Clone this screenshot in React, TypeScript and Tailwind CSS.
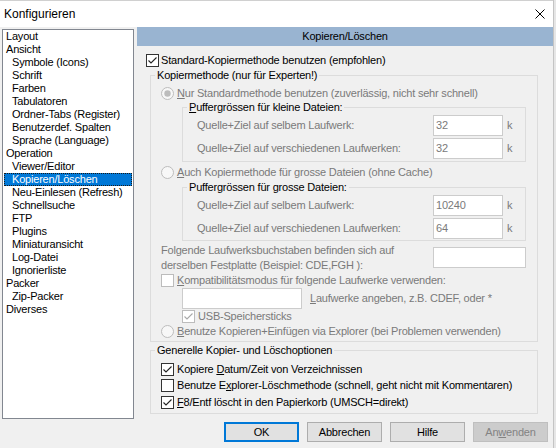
import React from "react";

const GRAY = "text-[#7a7a7a]";

function Check({ checked, disabled }: { checked?: boolean; disabled?: boolean }) {
  const stroke = disabled ? "#bcbcbc" : "#333333";
  return (
    <svg width="13" height="13" viewBox="0 0 13 13" className="shrink-0 block">
      <rect x="0.5" y="0.5" width="12" height="12" fill="#ffffff" stroke={stroke} />
      {checked && (
        <polyline
          points="2.5,6.5 5,9 10.5,3.5"
          fill="none"
          stroke={disabled ? "#a8a8a8" : "#222222"}
          strokeWidth="1.1"
        />
      )}
    </svg>
  );
}

function Radio({ checked, disabled }: { checked?: boolean; disabled?: boolean }) {
  return (
    <svg width="13" height="13" viewBox="0 0 13 13" className="shrink-0 block">
      <circle cx="6.5" cy="6.5" r="6" fill={disabled ? "#f7f7f7" : "#ffffff"} stroke={disabled ? "#bcbcbc" : "#333333"} />
      {checked && <circle cx="6.5" cy="6.5" r="3.2" fill={disabled ? "#bcbcbc" : "#333333"} />}
    </svg>
  );
}

function Group({
  label,
  className,
  children,
}: {
  label: React.ReactNode;
  className?: string;
  children: React.ReactNode;
}) {
  return (
    <fieldset className={`border border-[#dcdcdc] ${className ?? ""}`}>
      <legend className="ml-[4px] px-[2px] leading-[14px]">{label}</legend>
      {children}
    </fieldset>
  );
}

function SizeRow({ label, value, className }: { label: string; value: string; className?: string }) {
  return (
    <div className={`flex items-center pl-[14px] ${className ?? ""}`}>
      <span className={`w-[236px] ${GRAY}`}>{label}</span>
      <div className={`w-[70px] h-[21px] border border-[#cccccc] bg-white flex items-center pl-[2px] ${GRAY}`}>
        {value}
      </div>
      <span className={`ml-[4px] ${GRAY}`}>k</span>
    </div>
  );
}

const tree: { t: string; l: number; sel?: boolean }[] = [
  { t: "Layout", l: 0 },
  { t: "Ansicht", l: 0 },
  { t: "Symbole (Icons)", l: 1 },
  { t: "Schrift", l: 1 },
  { t: "Farben", l: 1 },
  { t: "Tabulatoren", l: 1 },
  { t: "Ordner-Tabs (Register)", l: 1 },
  { t: "Benutzerdef. Spalten", l: 1 },
  { t: "Sprache (Language)", l: 1 },
  { t: "Operation", l: 0 },
  { t: "Viewer/Editor", l: 1 },
  { t: "Kopieren/Löschen", l: 1, sel: true },
  { t: "Neu-Einlesen (Refresh)", l: 1 },
  { t: "Schnellsuche", l: 1 },
  { t: "FTP", l: 1 },
  { t: "Plugins", l: 1 },
  { t: "Miniaturansicht", l: 1 },
  { t: "Log-Datei", l: 1 },
  { t: "Ignorierliste", l: 1 },
  { t: "Packer", l: 0 },
  { t: "Zip-Packer", l: 1 },
  { t: "Diverses", l: 0 },
];

function Btn({ children, primary, disabled }: { children: React.ReactNode; primary?: boolean; disabled?: boolean }) {
  const cls = primary
    ? "border-2 border-[#0078d7] bg-[#e1e1e1] text-black"
    : disabled
    ? "border border-[#bfbfbf] bg-[#cccccc] text-[#838383]"
    : "border border-[#adadad] bg-[#e1e1e1] text-black";
  return <div className={`w-[75px] h-[20px] flex items-center justify-center ${cls}`}>{children}</div>;
}

export default function App() {
  return (
    <div className="w-[556px] h-[448px] flex bg-[#e6e6e6] font-['Liberation_Sans',Arial,sans-serif] text-[11px] tracking-[-0.2px] text-black overflow-hidden">
      <div className="w-[554px] h-[448px] flex flex-col bg-[#f0f0f0] border-r border-[#c4c4c4]">
        {/* title bar */}
        <div className="h-[27px] bg-white border-t border-[#d0d0d0] flex items-center justify-between pl-[4px] pr-[8px]">
          <span className="text-[12px] tracking-normal">Konfigurieren</span>
          <svg width="10" height="10" viewBox="0 0 10 10" className="block">
            <path d="M0.5 0.5 L9.5 9.5 M9.5 0.5 L0.5 9.5" stroke="#000" strokeWidth="1" />
          </svg>
        </div>

        {/* content */}
        <div className="flex h-[392px]">
          {/* tree */}
          <div className="mt-[2px] ml-[2px] w-[132px] h-[390px] border border-[#828790] bg-white flex flex-col">
            {tree.map((it) =>
              it.sel ? (
                <div
                  key={it.t}
                  className="mx-[1px] h-[13px] leading-[11px] bg-[#0078d7] text-white border border-dotted border-[#1a1a1a] pl-[7px]"
                >
                  {it.t}
                </div>
              ) : (
                <div key={it.t} className={`h-[13px] leading-[13px] ${it.l ? "pl-[9px]" : "pl-[3px]"}`}>
                  {it.t}
                </div>
              )
            )}
          </div>

          {/* right panel */}
          <div className="ml-[3px] w-[416px] flex flex-col">
            <div className="h-[19px] bg-[#99b4d1] flex items-center justify-center">Kopieren/Löschen</div>

            <div className="mt-[7px] ml-[9px] h-[14px] flex items-center gap-[2px]">
              <Check checked />
              <span>Standard-Kopiermethode benutzen (empfohlen)</span>
            </div>

            <Group className="mt-[1px] ml-[13px] w-[388px] pb-[3px]" label="Kopiermethode (nur für Experten!)">
              <div className="mt-[4px] ml-[10px] h-[14px] flex items-center gap-[3px]">
                <Radio checked disabled />
                <span className={GRAY}>
                  <u>N</u>ur Standardmethode benutzen (zuverlässig, nicht sehr schnell)
                </span>
              </div>

              <Group
                className="ml-[31px] w-[344px] pb-[2px]"
                label={
                  <>
                    <u>P</u>uffergrössen für kleine Dateien:
                  </>
                }
              >
                <SizeRow className="mt-[1px]" label="Quelle+Ziel auf selbem Laufwerk:" value="32" />
                <SizeRow className="mt-[2px]" label="Quelle+Ziel auf verschiedenen Laufwerken:" value="32" />
              </Group>

              <div className="mt-[3px] ml-[10px] h-[14px] flex items-center gap-[3px]">
                <Radio disabled />
                <span className={GRAY}>
                  <u>A</u>uch Kopiermethode für grosse Dateien (ohne Cache)
                </span>
              </div>

              <Group
                className="mt-[1px] ml-[31px] w-[344px] pb-[1px]"
                label={
                  <>
                    Puffergrössen für <u>g</u>rosse Dateien:
                  </>
                }
              >
                <SizeRow className="mt-[1px]" label="Quelle+Ziel auf selbem Laufwerk:" value="10240" />
                <SizeRow className="mt-[2px]" label="Quelle+Ziel auf verschiedenen Laufwerken:" value="64" />
              </Group>

              <div className="mt-[2px] ml-[10px] flex items-start">
                <div className={`w-[272px] leading-[15px] ${GRAY}`}>
                  Folgende Laufwerksbuchstaben befinden sich auf
                  <br />
                  derselben Festplatte (Beispiel: CDE,FGH ):
                </div>
                <div className="mt-[4px] w-[93px] h-[21px] border border-[#cccccc] bg-white" />
              </div>

              <div className="ml-[10px] h-[14px] flex items-center gap-[3px]">
                <Check disabled />
                <span className={GRAY}>
                  <u>K</u>ompatibilitätsmodus für folgende Laufwerke verwenden:
                </span>
              </div>

              <div className="mt-[1px] ml-[31px] flex items-center">
                <div className="w-[120px] h-[21px] border border-[#cccccc] bg-white" />
                <span className={`ml-[8px] ${GRAY}`}>
                  <u>L</u>aufwerke angeben, z.B. CDEF, oder *
                </span>
              </div>

              <div className="ml-[31px] h-[14px] flex items-center gap-[3px]">
                <Check checked disabled />
                <span className={GRAY}>USB-Speichersticks</span>
              </div>

              <div className="mt-[1px] ml-[10px] h-[14px] flex items-center gap-[3px]">
                <Radio disabled />
                <span className={GRAY}>
                  <u>B</u>enutze Kopieren+Einfügen via Explorer (bei Problemen verwenden)
                </span>
              </div>
            </Group>

            <Group className="mt-[1px] ml-[13px] w-[388px] pb-[4px]" label="Generelle Kopier- und Löschoptionen">
              <div className="mt-[5px] ml-[10px] h-[14px] flex items-center gap-[3px]">
                <Check checked />
                <span>
                  Kopiere <u>D</u>atum/Zeit von Verzeichnissen
                </span>
              </div>
              <div className="mt-[2px] ml-[10px] h-[14px] flex items-center gap-[3px]">
                <Check />
                <span>
                  Benutze E<u>x</u>plorer-Löschmethode (schnell, geht nicht mit Kommentaren)
                </span>
              </div>
              <div className="mt-[3px] ml-[10px] h-[14px] flex items-center gap-[3px]">
                <Check checked />
                <span>
                  <u>F</u>8/Entf löscht in den Papierkorb (UMSCH=direkt)
                </span>
              </div>
            </Group>
          </div>
        </div>

        {/* buttons */}
        <div className="mt-[3px] flex justify-end gap-[8px] pr-[5px]">
          <Btn primary>OK</Btn>
          <Btn>Abbrechen</Btn>
          <Btn>Hilfe</Btn>
          <Btn disabled>
            An<u>w</u>enden
          </Btn>
        </div>
      </div>
    </div>
  );
}
